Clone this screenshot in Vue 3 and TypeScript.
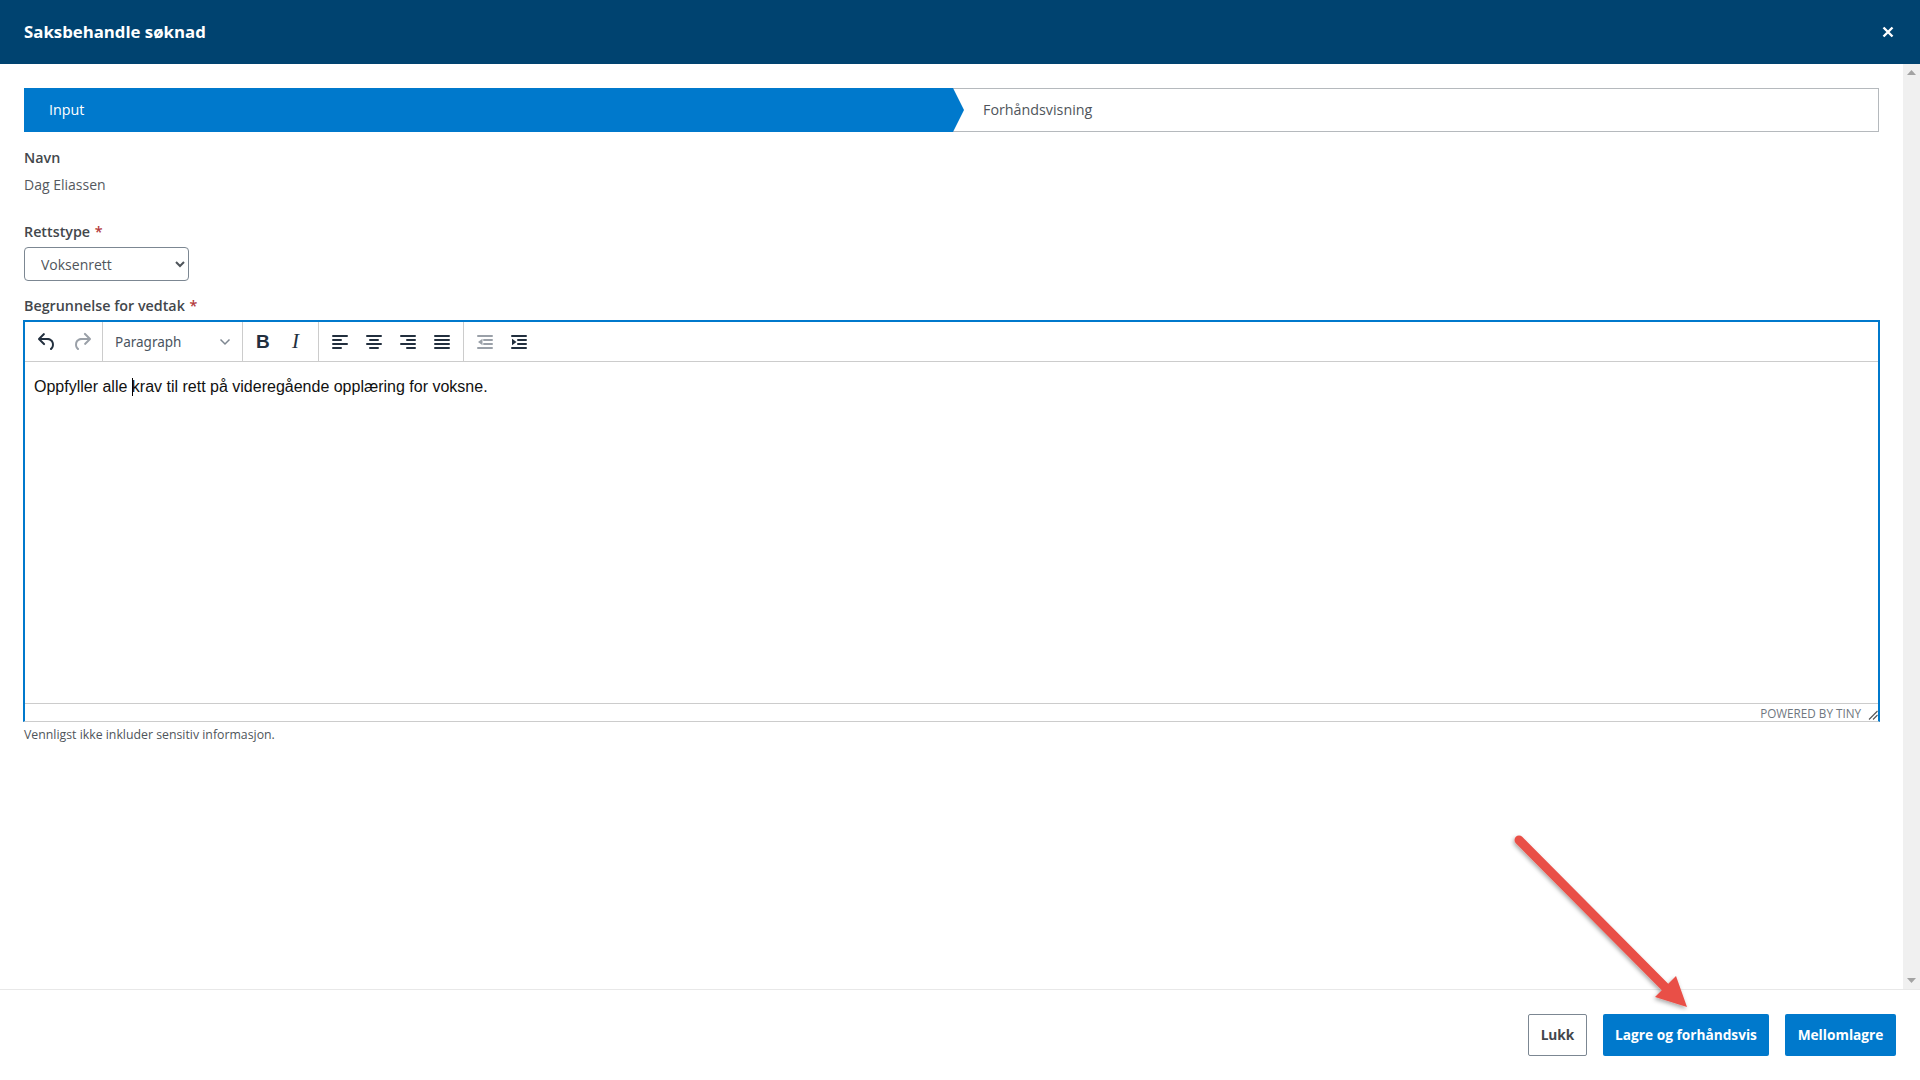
<script setup lang="ts">
const alignPaths = [
  "M5 5h14a1 1 0 0 1 0 2H5a1 1 0 1 1 0-2Zm0 4h8a1 1 0 0 1 0 2H5a1 1 0 1 1 0-2Zm0 8h8a1 1 0 0 1 0 2H5a1 1 0 0 1 0-2Zm0-4h14a1 1 0 0 1 0 2H5a1 1 0 0 1 0-2Z",
  "M5 5h14a1 1 0 0 1 0 2H5a1 1 0 1 1 0-2Zm3 4h8a1 1 0 0 1 0 2H8a1 1 0 1 1 0-2Zm0 8h8a1 1 0 0 1 0 2H8a1 1 0 0 1 0-2Zm-3-4h14a1 1 0 0 1 0 2H5a1 1 0 0 1 0-2Z",
  "M5 5h14a1 1 0 0 1 0 2H5a1 1 0 1 1 0-2Zm6 4h8a1 1 0 0 1 0 2h-8a1 1 0 0 1 0-2Zm0 8h8a1 1 0 0 1 0 2h-8a1 1 0 0 1 0-2Zm-6-4h14a1 1 0 0 1 0 2H5a1 1 0 0 1 0-2Z",
  "M5 5h14a1 1 0 0 1 0 2H5a1 1 0 1 1 0-2Zm0 4h14a1 1 0 0 1 0 2H5a1 1 0 1 1 0-2Zm0 4h14a1 1 0 0 1 0 2H5a1 1 0 0 1 0-2Zm0 4h14a1 1 0 0 1 0 2H5a1 1 0 0 1 0-2Z",
];
const undo = "M6.4 8H12c3.700 0 6.200 2 6.800 5.100.6 2.700-.4 5.600-2.300 6.800a1 1 0 0 1-1-1.800c1.100-.7 1.800-2.700 1.400-4.600-.5-2.100-2.100-3.500-4.900-3.500H6.400l3.300 3.300a1 1 0 1 1-1.400 1.400l-5-5a1 1 0 0 1 0-1.400l5-5a1 1 0 0 1 1.400 1.400L6.400 8Z";
const redo = "M17.600 10H12c-2.800 0-4.400 1.400-4.900 3.500-.4 2 .3 3.900 1.400 4.600a1 1 0 1 1-1 1.800c-1.900-1.200-2.900-4.100-2.300-6.800C5.800 10 8.300 8 12 8h5.600l-3.300-3.300a1 1 0 1 1 1.400-1.400l5 5a1 1 0 0 1 0 1.400l-5 5a1 1 0 0 1-1.400-1.400l3.300-3.300Z";
const indentLines = "M5 5h14a1 1 0 0 1 0 2H5a1 1 0 1 1 0-2Zm6 4h8a1 1 0 0 1 0 2h-8a1 1 0 0 1 0-2Zm0 4h8a1 1 0 0 1 0 2h-8a1 1 0 0 1 0-2Zm-6 4h14a1 1 0 0 1 0 2H5a1 1 0 0 1 0-2Z";
</script>

<template>
  <div class="page">
    <header class="top">
      <h1>Saksbehandle søknad</h1>
      <svg class="close" width="12" height="12" viewBox="0 0 12 12"><path d="M1.500 1.500l9 9M10.500 1.500l-9 9" stroke="#fff" stroke-width="2.400"/></svg>
    </header>

    <div class="middle">
      <main class="content">
        <div class="steps">
          <div class="step active">Input</div>
          <div class="step rest">Forhåndsvisning</div>
        </div>

        <div class="label first">Navn</div>
        <div class="value">Dag Eliassen</div>

        <div class="label second">Rettstype <span class="req">*</span></div>
        <select class="sel"><option>Voksenrett</option></select>

        <div class="label third">Begrunnelse for vedtak <span class="req">*</span></div>
        <div class="editor">
          <div class="toolbar">
            <div class="group g-hist">
              <svg width="24" height="24" viewBox="0 0 24 24" fill="#222f3e"><path :d="undo"/></svg>
              <svg width="24" height="24" viewBox="0 0 24 24" fill="#9aa0a8"><path :d="redo"/></svg>
            </div>
            <div class="group g-para">
              <span class="para">Paragraph</span>
              <svg width="12" height="8" viewBox="0 0 12 8" fill="none" stroke="#7e8791" stroke-width="1.500"><path d="M1.500 1.500L6 6l4.500-4.500"/></svg>
            </div>
            <div class="group g-fmt">
              <span class="bold">B</span>
              <span class="ital">I</span>
            </div>
            <div class="group g-align">
              <svg v-for="(d, i) in alignPaths" :key="i" width="24" height="24" viewBox="0 0 24 24" fill="#222f3e"><path :d="d"/></svg>
            </div>
            <div class="group g-ind">
              <svg width="24" height="24" viewBox="0 0 24 24" fill="#9aa0a8"><path :d="indentLines"/><path d="M9.500 8.800v6.400L5 12z"/></svg>
              <svg width="24" height="24" viewBox="0 0 24 24" fill="#222f3e"><path :d="indentLines"/><path d="M5 8.800v6.400L9.500 12z"/></svg>
            </div>
          </div>
          <div class="text">Oppfyller alle <span class="caret"></span>krav til rett på videregående opplæring for voksne.</div>
          <div class="status">
            <span>POWERED BY TINY</span>
            <svg width="10" height="10" viewBox="0 0 10 10" stroke="#555" stroke-width="1.100" fill="none"><path d="M1 9.500L9.500 1M5 9.500L9.500 5"/></svg>
          </div>
        </div>
        <div class="note">Vennligst ikke inkluder sensitiv informasjon.</div>
      </main>

      <aside class="scroll">
        <svg width="9" height="5" viewBox="0 0 9 5"><path d="M4.500 0L9 5H0z" fill="#a3a3a3"/></svg>
        <svg width="9" height="5" viewBox="0 0 9 5"><path d="M4.500 5L9 0H0z" fill="#a3a3a3"/></svg>
      </aside>
    </div>

    <footer class="foot">
      <button class="btn ghost">Lukk</button>
      <button class="btn primary save">Lagre og forhåndsvis</button>
      <button class="btn primary cache">Mellomlagre</button>
    </footer>

    <svg class="arrow" width="200" height="200" viewBox="0 0 200 200">
      <defs>
        <filter id="sh" x="-20%" y="-20%" width="140%" height="140%"><feDropShadow dx="-1" dy="2" stdDeviation="2" flood-color="#000" flood-opacity=".35"/></filter>
      </defs>
      <g filter="url(#sh)">
        <path d="M9 10L155 157" stroke="#e94f47" stroke-width="9" stroke-linecap="round" fill="none"/>
        <path d="M177 177L145 167 166 146z" fill="#e94f47"/>
      </g>
    </svg>
  </div>
</template>

<style scoped>
.page {
  position: relative;
  width: 1920px;
  height: 1080px;
  display: flex;
  flex-direction: column;
  background: #fff;
  overflow: hidden;
  font-family: "Open Sans", "Liberation Sans", sans-serif;
  color: #4a4f55;
}
.top {
  height: 64px;
  flex: none;
  background: #004370;
  display: flex;
  align-items: center;
  justify-content: space-between;
  padding: 0 26px 0 24px;
}
.top h1 {
  margin: 0;
  font-size: 16.800px;
  font-weight: 700;
  color: #fff;
  line-height: 1;
}
.close { position: relative; }
.middle {
  flex: 1;
  display: flex;
  min-height: 0;
  border-bottom: 1px solid #e8e8e8;
}
.content {
  flex: 1;
  padding: 24px 23px 0 24px;
  min-width: 0;
}
.scroll {
  width: 17px;
  background: #f0f0f0;
  display: flex;
  flex-direction: column;
  justify-content: space-between;
  align-items: center;
  padding: 6px 0;
}
.steps {
  display: flex;
  height: 44px;
  font-size: 14.300px;
  margin-right: 1px;
  line-height: 18px;
}
.step {
  display: flex;
  align-items: center;
  box-sizing: border-box;
}
.active {
  width: 940px;
  flex: none;
  background: #0079cc;
  color: #fff;
  padding-left: 25px;
  clip-path: polygon(0 0, 929px 0, 940px 50%, 929px 100%, 0 100%);
  position: relative;
  z-index: 1;
}
.rest {
  flex: 1;
  border: 1px solid #b5b9bd;
  border-left: none;
  margin-left: -11px;
  padding-left: 30px;
  color: #4f555b;
}
.label {
  font-size: 14.300px;
  font-weight: 600;
  color: #43474c;
  line-height: 20px;
}
.first { margin-top: 16px; }
.value {
  font-size: 14px;
  line-height: 20px;
  margin-top: 7px;
  color: #55595e;
}
.second { margin-top: 27px; }
.third { margin-top: 15px; }
.req { color: #b33a3a; margin-left: 1px; }
.sel {
  display: block;
  margin: 5px 0 0 0;
  width: 165px;
  height: 34px;
  box-sizing: border-box;
  border: 1px solid #7c8792;
  border-radius: 4px;
  background: #fff;
  color: #4f555b;
  font: 14px "Open Sans", sans-serif;
  padding-left: 12px;
}
.editor {
  margin: 4px 0 0 -1px;
  height: 402px;
  box-sizing: border-box;
  border-top: 2px solid #0079cc;
  border-left: 2px solid #0079cc;
  border-right: 2px solid #0079cc;
  border-bottom: 1px solid #ccc;
  display: flex;
  flex-direction: column;
}
.toolbar {
  height: 40px;
  flex: none;
  box-sizing: border-box;
  border-bottom: 1px solid #ccc;
  display: flex;
}
.group {
  display: flex;
  align-items: center;
  height: 100%;
  box-sizing: border-box;
  border-right: 1px solid #ccc;
}
.group:last-child { border-right: none; }
.g-hist { width: 78px; padding-left: 10px; gap: 11px; }
.g-para { width: 140px; padding-left: 12px; justify-content: space-between; padding-right: 11px; }
.para { font-size: 13.500px; color: #4a5460; font-family: "Noto Sans", "Open Sans", sans-serif; }
.g-fmt { width: 76px; padding-left: 13px; }
.bold { font: 700 19px "Liberation Sans", sans-serif; color: #222f3e; width: 36px; }
.ital { font: italic 400 21px "Liberation Serif", serif; color: #222f3e; }
.g-align { width: 145px; padding-left: 9px; gap: 10px; }
.g-ind { padding-left: 9px; gap: 10px; }
.text {
  flex: 1;
  padding: 15px 9px;
  font: 16px/20px "Liberation Sans", sans-serif;
  color: #111;
}
.caret {
  display: inline-block;
  width: 1px;
  height: 18px;
  background: #000;
  vertical-align: -4px;
  margin-right: -1px;
}
.status {
  height: 18px;
  flex: none;
  box-sizing: border-box;
  border-top: 1px solid #ccc;
  display: flex;
  align-items: center;
  justify-content: flex-end;
  font-size: 11.700px;
  color: #6f7780;
  gap: 7px;
}
.status svg { margin-top: 5px; }
.note {
  font-size: 12.300px;
  line-height: 16px;
  margin-top: 5px;
  color: #4f555b;
}
.foot {
  flex: none;
  height: 90px;
  box-sizing: border-box;
  display: flex;
  justify-content: flex-end;
  gap: 16px;
  padding: 24px 24px 0 0;
}
.btn {
  height: 42px;
  box-sizing: border-box;
  border-radius: 2px;
  font: 700 13.700px "Open Sans", sans-serif;
  padding: 0 0 2px;
}
.ghost {
  width: 59px;
  background: #fff;
  border: 1px solid #7c8792;
  color: #43474c;
}
.primary {
  background: #0079cc;
  border: none;
  color: #fff;
}
.save { width: 166px; }
.cache { width: 111px; }
.arrow {
  position: absolute;
  left: 1510px;
  top: 830px;
  pointer-events: none;
}
</style>
